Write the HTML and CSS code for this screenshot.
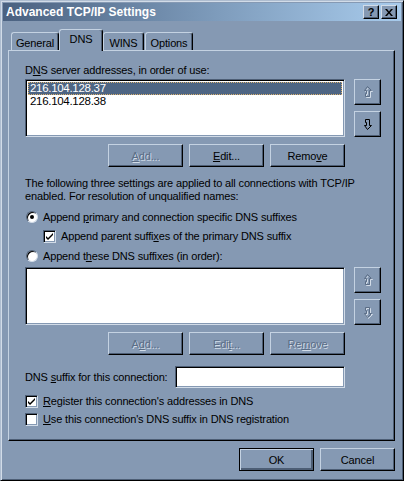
FILE: index.html
```html
<!DOCTYPE html>
<html lang="en">
<head>
  <meta charset="UTF-8" />
  <title>Advanced TCP/IP Settings</title>
  <link rel="stylesheet" href="styles.css">
</head>
<body>
  <div class="window">
    <div class="titlebar">
      <span class="title">Advanced TCP/IP Settings</span>
      <div class="caption-btns">
        <span class="cbtn">?</span>
        <span class="cbtn close">
          <svg width="8" height="7" viewBox="0 0 8 7"><path d="M0 0h2l2 2.5 2-2.5h2l-3 3.5 3 3.5h-2l-2-2.5-2 2.5h-2l3-3.5z" fill="#000"/></svg>
        </span>
      </div>
    </div>

    <div class="tabs">
      <div class="tab t-general">General</div>
      <div class="tab t-dns active">DNS</div>
      <div class="tab t-wins">WINS</div>
      <div class="tab t-options">Options</div>
    </div>

    <div class="panel">
      <div class="label">D<u>N</u>S server addresses, in order of use:</div>

      <div class="list-row">
        <div class="listbox">
          <div class="item selected">216.104.128.37</div>
          <div class="item">216.104.128.38</div>
        </div>
        <div class="arrows">
          <div class="abtn disabled">
            <svg width="9" height="12" viewBox="0 0 9 12"><path class="hi" d="M5.5 1.5l4 4h-2v6h-4v-3h1v-3h-2z"/><path class="ar" d="M4.5 0.5l4 4h-2v6h-4v-3h1v-3h-2z"/></svg>
          </div>
          <div class="abtn">
            <svg width="9" height="12" viewBox="0 0 9 12"><path class="ar" d="M4.5 11.5l4-4h-2v-6h-4v3h1v3h-2z"/></svg>
          </div>
        </div>
      </div>

      <div class="btn-row">
        <span class="btn disabled"><u>A</u>dd...</span>
        <span class="btn"><u>E</u>dit...</span>
        <span class="btn">Remo<u>v</u>e</span>
      </div>

      <p class="info">The following three settings are applied to all connections with TCP/IP<br>enabled. For resolution of unqualified names:</p>

      <div class="opt radio-row r1">
        <span class="radio checked"></span>
        <span>Append <u>p</u>rimary and connection specific DNS suffixes</span>
      </div>
      <div class="opt check-row indent">
        <span class="check checked">
          <svg width="9" height="9" viewBox="0 0 9 9"><path d="M1 4l2 2 5-5v2l-5 5-2-2z" fill="#000"/></svg>
        </span>
        <span>Append parent suffi<u>x</u>es of the primary DNS suffix</span>
      </div>
      <div class="opt radio-row r2">
        <span class="radio"></span>
        <span>Append t<u>h</u>ese DNS suffixes (in order):</span>
      </div>

      <div class="list-row second">
        <div class="listbox"></div>
        <div class="arrows">
          <div class="abtn disabled">
            <svg width="9" height="12" viewBox="0 0 9 12"><path class="hi" d="M5.5 1.5l4 4h-2v6h-4v-3h1v-3h-2z"/><path class="ar" d="M4.5 0.5l4 4h-2v6h-4v-3h1v-3h-2z"/></svg>
          </div>
          <div class="abtn disabled">
            <svg width="9" height="12" viewBox="0 0 9 12"><path class="hi" d="M5.5 12.5l4-4h-2v-6h-4v3h1v3h-2z"/><path class="ar" d="M4.5 11.5l4-4h-2v-6h-4v3h1v3h-2z"/></svg>
          </div>
        </div>
      </div>

      <div class="btn-row">
        <span class="btn disabled">A<u>d</u>d...</span>
        <span class="btn disabled">Edi<u>t</u>...</span>
        <span class="btn disabled">Re<u>m</u>ove</span>
      </div>

      <div class="suffix-row">
        <span>DNS <u>s</u>uffix for this connection:</span>
        <span class="textbox"></span>
      </div>

      <div class="opt check-row c1">
        <span class="check checked">
          <svg width="9" height="9" viewBox="0 0 9 9"><path d="M1 4l2 2 5-5v2l-5 5-2-2z" fill="#000"/></svg>
        </span>
        <span><u>R</u>egister this connection's addresses in DNS</span>
      </div>
      <div class="opt check-row c2">
        <span class="check"></span>
        <span><u>U</u>se this connection's DNS suffix in DNS registration</span>
      </div>
    </div>

    <div class="footer">
      <span class="btn default">OK</span>
      <span class="btn">Cancel</span>
    </div>
  </div>
</body>
</html>
```

FILE: styles.css
```css
* {
  box-sizing: border-box;
}

body {
  margin: 0;
  background: #8599b3;
  font-family: 'Liberation Sans', Arial, sans-serif;
  font-size: 11px;
  letter-spacing: -0.15px;
  color: #000;
  white-space: nowrap;
}

u {
  text-decoration: underline;
  text-underline-offset: 1px;
}

.window {
  width: 404px;
  height: 481px;
  background: #8599b3;
  border: 1px solid;
  border-color: #aebdd0 #000 #000 #aebdd0;
  box-shadow: inset 1px 1px #d2dce8, inset -1px -1px #4d5e75;
  padding: 2px;
}

/* title bar */

.titlebar {
  height: 18px;
  background: linear-gradient(to right, #4a6180, #7f9dbd 55%, #a8cbec);
  display: flex;
  align-items: center;
  justify-content: space-between;
  padding: 0 4px 0 3px;
}

.title {
  color: #fff;
  font-weight: bold;
  font-size: 12px;
  letter-spacing: 0;
}

.caption-btns {
  display: flex;
  gap: 2px;
}

.cbtn {
  width: 16px;
  height: 14px;
  background: #8599b3;
  border: 1px solid;
  border-color: #d2dce8 #000 #000 #d2dce8;
  box-shadow: inset -1px -1px #4d5e75;
  display: flex;
  align-items: center;
  justify-content: center;
  font-weight: bold;
  font-size: 11px;
  line-height: 1;
}

/* tabs */

.tabs {
  display: flex;
  align-items: flex-end;
  height: 21px;
  margin-top: 8px;
  padding-left: 8px;
  position: relative;
  z-index: 1;
}

.tab {
  height: 18px;
  border: 1px solid;
  border-bottom: none;
  border-color: #c4d2e2 #000 #000 #c4d2e2;
  box-shadow: inset -1px 0 #4d5e75;
  border-radius: 3px 3px 0 0;
  display: flex;
  align-items: center;
  justify-content: center;
  padding-top: 2px;
}

.t-general { width: 48px; }
.t-dns { width: 44px; }
.t-wins { width: 41px; }
.t-options { width: 48px; margin-left: 1px; }

.tab.active {
  height: 22px;
  margin-bottom: -1px;
  background: #8599b3;
  padding-top: 0;
  padding-bottom: 3px;
}

/* panel */

.panel {
  width: 387px;
  height: 391px;
  margin-left: 5px;
  border: 1px solid;
  border-color: #c4d2e2 #000 #000 #c4d2e2;
  box-shadow: inset -1px -1px #4d5e75;
  padding: 13px 0 0 16px;
}

.label {
  height: 13px;
  line-height: 13px;
}

.list-row {
  display: flex;
  gap: 9px;
  margin-top: 2px;
}

.list-row.second {
  margin-top: 4px;
}

.listbox {
  width: 320px;
  height: 58px;
  background: #fff;
  border: 1px solid;
  border-color: #4d5e75 #d2dce8 #d2dce8 #4d5e75;
  box-shadow: inset 1px 1px #000, inset -1px -1px #8599b3;
  padding: 2px 2px;
}

.item {
  height: 13px;
  line-height: 13px;
  padding-left: 2px;
  font-size: 11.5px;
  letter-spacing: -0.3px;
}

.item.selected {
  background: #4e6583;
  color: #fff;
  outline: 1px dotted #d8b070;
  outline-offset: -1px;
}

.arrows {
  display: flex;
  flex-direction: column;
  gap: 6px;
}

.abtn {
  width: 27px;
  height: 26px;
  border: 1px solid;
  border-color: #c4d2e2 #000 #000 #c4d2e2;
  box-shadow: inset -1px -1px #4d5e75;
  display: flex;
  align-items: center;
  justify-content: center;
}

.abtn svg {
  overflow: visible;
}

.ar {
  fill: none;
  stroke: #000;
  stroke-width: 1;
}

.hi {
  fill: none;
  stroke: #d2dce8;
  stroke-width: 1;
}

.abtn.disabled .ar {
  stroke: #5b6d86;
}

/* buttons */

.btn-row {
  width: 320px;
  display: flex;
  justify-content: flex-end;
  gap: 6px;
  margin-top: 7px;
}

.btn {
  width: 75px;
  height: 23px;
  border: 1px solid;
  border-color: #c4d2e2 #000 #000 #c4d2e2;
  box-shadow: inset -1px -1px #4d5e75;
  display: flex;
  align-items: center;
  justify-content: center;
}

.btn.disabled {
  color: #5b6d86;
  text-shadow: 1px 1px #d2dce8;
}

.info {
  margin: 10px 0 0;
  line-height: 13px;
}

/* radios and checks */

.opt {
  display: flex;
  align-items: center;
  height: 14px;
  gap: 5px;
}

.r1 { margin-top: 7px; }
.indent { margin-top: 5px; padding-left: 18px; }
.r2 { margin-top: 6px; }
.c1 { margin-top: 6px; }
.c2 { margin-top: 4px; }

.radio {
  width: 12px;
  height: 12px;
  border-radius: 50%;
  background: #fff;
  border: 1px solid;
  border-color: #4d5e75 #d2dce8 #d2dce8 #4d5e75;
  box-shadow: inset 1px 1px #000;
  display: flex;
  align-items: center;
  justify-content: center;
  margin-left: 1px;
}

.radio.checked::after {
  content: "";
  width: 4px;
  height: 4px;
  border-radius: 50%;
  background: #000;
}

.check {
  width: 13px;
  height: 13px;
  background: #fff;
  border: 1px solid;
  border-color: #4d5e75 #d2dce8 #d2dce8 #4d5e75;
  box-shadow: inset 1px 1px #000, inset -1px -1px #8599b3;
  display: flex;
  align-items: center;
  justify-content: center;
}

/* suffix */

.suffix-row {
  display: flex;
  align-items: center;
  margin-top: 11px;
  width: 320px;
  justify-content: space-between;
}

.textbox {
  width: 170px;
  height: 22px;
  background: #fff;
  border: 1px solid;
  border-color: #4d5e75 #d2dce8 #d2dce8 #4d5e75;
  box-shadow: inset 1px 1px #000, inset -1px -1px #8599b3;
}

/* footer */

.footer {
  display: flex;
  justify-content: flex-end;
  gap: 6px;
  margin-top: 7px;
  padding-right: 6px;
}

.btn.default {
  border: 1px solid #000;
  box-shadow: inset 1px 1px #c4d2e2, inset -2px -2px #4d5e75, inset -1px -1px #000;
}
```
